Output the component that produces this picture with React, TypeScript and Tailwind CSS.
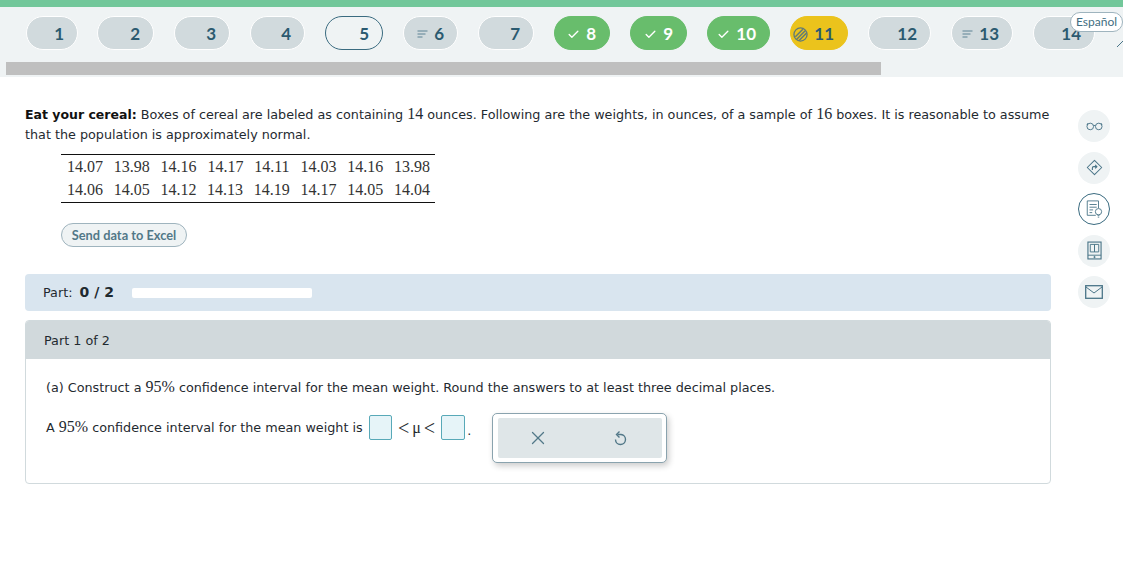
import { Check, X } from 'lucide-react'

type Status = 'plain' | 'current' | 'lines' | 'done' | 'partial'

const questions: { label: string; status: Status; width: string }[] = [
  { label: '1', status: 'plain', width: 'w-[52px] -mr-[1px]' },
  { label: '2', status: 'plain', width: 'w-[57px]' },
  { label: '3', status: 'plain', width: 'w-[56px]' },
  { label: '4', status: 'plain', width: 'w-[55px]' },
  { label: '5', status: 'current', width: 'w-[58px]' },
  { label: '6', status: 'lines', width: 'w-[55px]' },
  { label: '7', status: 'plain', width: 'w-[56px]' },
  { label: '8', status: 'done', width: 'w-[56px]' },
  { label: '9', status: 'done', width: 'w-[57px]' },
  { label: '10', status: 'done', width: 'w-[63px]' },
  { label: '11', status: 'partial', width: 'w-[58px]' },
  { label: '12', status: 'plain', width: 'w-[63px]' },
  { label: '13', status: 'lines', width: 'w-[62px]' },
  { label: '14', status: 'plain', width: 'w-[62px]' },
]

const pillStyles: Record<Status, string> = {
  plain: 'bg-[#d1dadd] border-white text-[#2b5a70]',
  current: 'bg-[#eff3f4] border-[#3a6b80] text-[#2b5a70]',
  lines: 'bg-[#d1dadd] border-white text-[#2b5a70]',
  done: 'bg-[#68bd6c] border-[#68bd6c] text-white',
  partial: 'bg-[#ebc31c] border-[#ebc31c] text-[#2b5a70]',
}

const data = [
  ['14.07', '13.98', '14.16', '14.17', '14.11', '14.03', '14.16', '13.98'],
  ['14.06', '14.05', '14.12', '14.13', '14.19', '14.17', '14.05', '14.04'],
]

const LinesIcon = () => (
  <svg width="11" height="8" viewBox="0 0 11 8" fill="none" stroke="#5d8294" strokeWidth="1">
    <path d="M0.5 1h10M0.5 4h8M0.5 7h5" />
  </svg>
)

const HatchIcon = () => (
  <svg width="15" height="15" viewBox="0 0 16 16" fill="none">
    <circle cx="8" cy="8" r="7" fill="#ebc31c" stroke="#5f7a78" strokeWidth="1.4" />
    <path d="M2.5 10.5 10.5 2.5M4 13 13 4M6.5 14.5 14.5 6.5" stroke="#5f7a78" strokeWidth="1.6" />
  </svg>
)

const QuestionPill = ({ label, status, width }: { label: string; status: Status; width: string }) => (
  <div
    className={`${width} ${pillStyles[status]} h-[34px] shrink-0 rounded-[17px] border flex items-center justify-end gap-[6px] pr-[13px] pt-[2px] text-[17px] font-bold font-['Lato',sans-serif]`}
  >
    {status === 'lines' && <LinesIcon />}
    {status === 'done' && <Check size={13} strokeWidth={2.5} />}
    {status === 'partial' && <HatchIcon />}
    <span>{label}</span>
  </div>
)

const SideButton = ({ children, active }: { children: React.ReactNode; active?: boolean }) => (
  <div
    className={`w-8 h-8 rounded-full flex items-center justify-center ${
      active ? 'border border-[#3a6b80] bg-white' : 'bg-[#eff3f4]'
    }`}
  >
    {children}
  </div>
)

const stroke = { fill: 'none', stroke: '#4a7588', strokeWidth: 1 }
const serif = "font-['Liberation_Serif',serif] text-[16px]"

export default function App() {
  return (
    <div className="relative min-h-[576px] bg-white overflow-hidden font-['DejaVu_Sans',sans-serif] text-[12.75px] leading-5 text-[#1f2a30]">
      {/* Header */}
      <div className="h-[7px] bg-[#72c79a]" />
      <div className="h-[70px] bg-[#eff3f4] pl-[6px]">
        <div className="flex gap-[20px] pl-[20px] pt-[9px]">
          {questions.map((q) => (
            <QuestionPill key={q.label} {...q} />
          ))}
        </div>
        <div className="mt-[12px] h-[13px] w-[875px] bg-[#bfbfbf]" />
      </div>

      <div className="absolute left-[1070px] top-[12px] h-[20px] w-[53px] rounded-[10px] border border-[#9fb4be] bg-white flex items-center justify-center text-[12px] font-['Lato',sans-serif] text-[#3f6e82]">
        Español
      </div>
      <svg className="absolute left-[1114px] top-[30px]" width="9" height="20" viewBox="0 0 9 20" fill="none">
        <path d="M9 1a9 9 0 0 0-8 9 9 9 0 0 0 8 9" fill="#eff3f4" />
        <path d="M3 17l6-6" stroke="#4a7588" strokeWidth="1" />
      </svg>

      <div className="flex pl-[25px] pt-[27px]">
        {/* Question */}
        <div className="w-[1026px] shrink-0">
          <p>
            <b className="text-[12.5px] text-[#111]">Eat your cereal:</b> Boxes of cereal are labeled as containing{' '}
            <span className={serif}>14</span> ounces. Following are the weights, in ounces, of a sample of{' '}
            <span className={serif}>16</span> boxes. It is reasonable to assume that the population is approximately
            normal.
          </p>

          <div className={`ml-[36px] mt-[9px] w-[374px] border-y border-[#111] h-[49px] flex flex-col justify-center gap-[3px] ${serif} text-[#333]`}>
            {data.map((row, i) => (
              <div key={i} className="flex justify-between pl-[6px] pr-[5px]">
                {row.map((v, j) => (
                  <span key={j}>{v}</span>
                ))}
              </div>
            ))}
          </div>

          <button className="ml-[36px] mt-[20px] block h-[24px] w-[126px] rounded-[12px] border border-[#9fb4be] bg-[#eff3f4] pb-[1px] font-['Lato',sans-serif] text-[12.8px] font-bold text-[#527888]">
            Send data to Excel
          </button>

          <div className="mt-[27px] h-[37px] rounded-[4px] bg-[#d9e5ef] pl-[18px] flex items-center">
            <span className="w-[89px]">
              Part: <b className="ml-[3px] text-[14px]">0 / 2</b>
            </span>
            <div className="h-[10px] w-[180px] rounded-[2px] bg-white" />
          </div>

          <div className="mt-[9px] h-[164px] rounded-[4px] border border-[#d1dadd]">
            <div className="h-[38px] rounded-t-[3px] bg-[#d1d9dc] pl-[18px] pt-[1px] flex items-center">Part 1 of 2</div>
            <div className="pl-[20px] pt-[18px]">
              (a) Construct a <span className={serif}>95%</span> confidence interval for the mean weight. Round the
              answers to at least three decimal places.
            </div>
            <div className="relative pl-[20px] pt-[17px] flex items-center">
              <span className="w-[323px]">
                A <span className={serif}>95%</span> confidence interval for the mean weight is
              </span>
              <span className="h-[25px] w-[23px] rounded-[2px] border border-[#58a9b8] bg-[#e6f4f8]" />
              <span className={`ml-[6px] mr-[6px] flex items-center gap-[3px] ${serif}`}>
                <span className="text-[20px]">&lt;</span>
                <span>μ</span>
                <span className="text-[20px]">&lt;</span>
              </span>
              <span className="h-[25px] w-[24px] rounded-[2px] border border-[#58a9b8] bg-[#e6f4f8]" />
              <span className="ml-[2px] self-end leading-[18px]">.</span>
              <div className="absolute left-[466px] top-[15px] h-[50px] w-[175px] rounded-[5px] border border-[#8aa3ae] bg-white p-[4px] pl-[5px] shadow-[2px_3px_6px_rgba(0,0,0,0.2)]">
                <div className="h-full rounded-[2px] bg-[#dfe6e8] flex items-center text-[#527888]">
                  <X size={22} strokeWidth={1.4} className="ml-[29px]" />
                  <svg className="ml-[64px]" width="14" height="16" viewBox="0 0 14 16" fill="none" stroke="currentColor" strokeWidth="1.4">
                    <path d="M4.500 4.500H8a5 5 0 1 1-5.500 5" />
                    <path d="M6.500 1.500 3.500 4.500l3 3" />
                  </svg>
                </div>
              </div>
            </div>
          </div>
        </div>

        {/* Side tools */}
        <div className="ml-[27px] mt-[6px] flex flex-col gap-[9.5px]">
          <SideButton>
            <svg width="17" height="10" viewBox="0 0 18 10" {...stroke}>
              <circle cx="4.500" cy="5.500" r="3.500" />
              <circle cx="13.500" cy="5.500" r="3.500" />
              <path d="M8 4.500h2M1 4 2 2M17 4l-1-2" />
            </svg>
          </SideButton>
          <SideButton>
            <svg width="17" height="17" viewBox="0 0 20 20" {...stroke}>
              <path d="M10 1.500 18.500 10 10 18.500 1.500 10Z" strokeWidth="1.200" strokeLinejoin="round" />
              <path d="M7.500 13v-2.500a1.500 1.500 0 0 1 1.500-1.500h3.500M10.800 7l2 2-2 2" strokeWidth="1.300" />
            </svg>
          </SideButton>
          <SideButton active>
            <svg width="18" height="20" viewBox="0 0 20 22" {...stroke}>
              <path d="M12 18H2.500V2h12.500v8" />
              <path d="M5 6h8M5 9h8M5 12h4M5 15h3" />
              <circle cx="15" cy="14" r="3.500" />
              <path d="M13.800 18h2.400M14.200 20h1.600" />
            </svg>
          </SideButton>
          <SideButton>
            <svg width="15" height="19" viewBox="0 0 16 20" {...stroke}>
              <rect x="1" y="1" width="14" height="18" strokeWidth="1.200" />
              <path d="M3.500 3.500h4.500v8H3.500ZM8 3.500h4.500v8H8ZM1 15h14" />
              <circle cx="8" cy="17" r="0.700" fill="#4a7588" />
            </svg>
          </SideButton>
          <SideButton>
            <svg width="18" height="14" viewBox="0 0 18 14" {...stroke}>
              <rect x="0.700" y="0.700" width="16.600" height="12.600" strokeWidth="1.300" />
              <path d="M1 2l8 6 8-6" />
            </svg>
          </SideButton>
        </div>
      </div>
    </div>
  )
}
